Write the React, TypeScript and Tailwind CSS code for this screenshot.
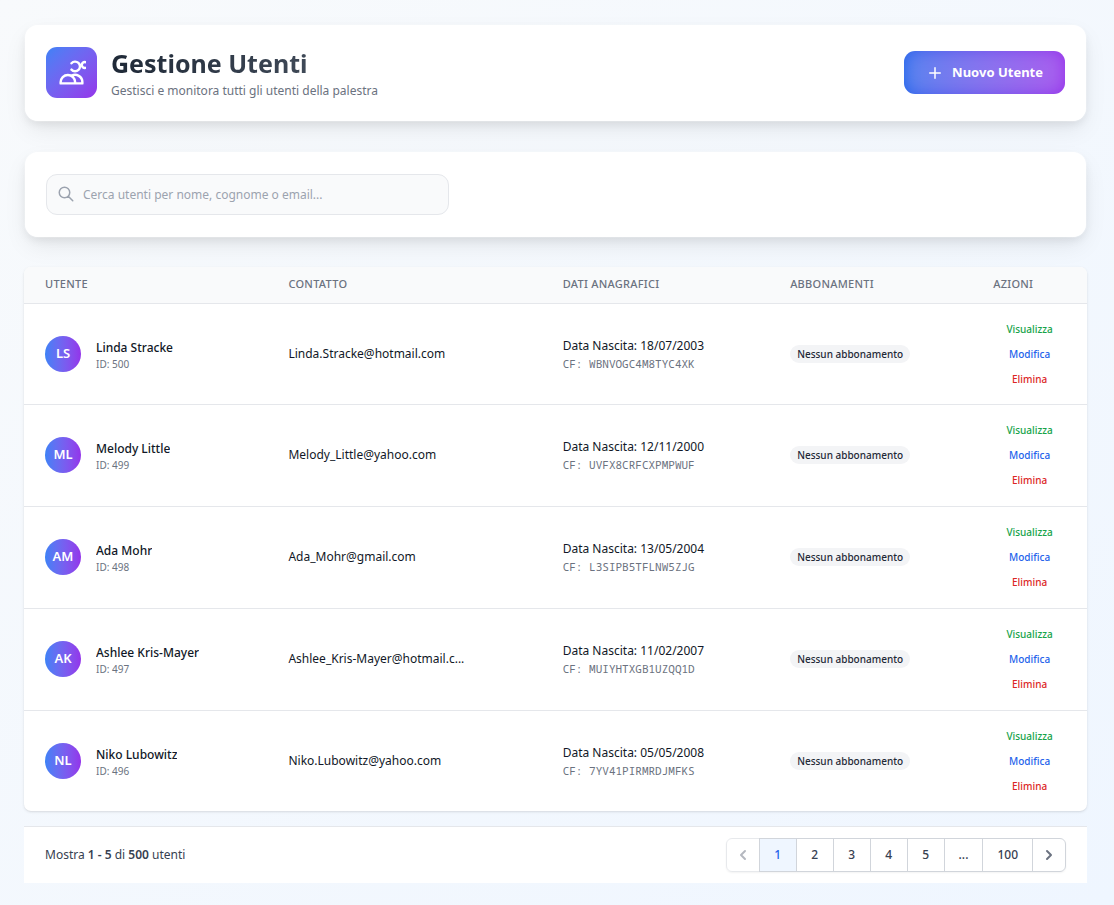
import { ChevronLeft, ChevronRight } from "lucide-react";

const users = [
  { initials: "LS", name: "Linda Stracke", id: 500, email: "Linda.Stracke@hotmail.com", birth: "18/07/2003", cf: "WBNVOGC4M8TYC4XK" },
  { initials: "ML", name: "Melody Little", id: 499, email: "Melody_Little@yahoo.com", birth: "12/11/2000", cf: "UVFX8CRFCXPMPWUF" },
  { initials: "AM", name: "Ada Mohr", id: 498, email: "Ada_Mohr@gmail.com", birth: "13/05/2004", cf: "L3SIPB5TFLNW5ZJG" },
  { initials: "AK", name: "Ashlee Kris-Mayer", id: 497, email: "Ashlee_Kris-Mayer@hotmail.c...", birth: "11/02/2007", cf: "MUIYHTXGB1UZQQ1D" },
  { initials: "NL", name: "Niko Lubowitz", id: 496, email: "Niko.Lubowitz@yahoo.com", birth: "05/05/2008", cf: "7YV41PIRMRDJMFKS" },
];

const columns = [
  { label: "Utente", width: "w-[22.9%]" },
  { label: "Contatto", width: "w-[25.8%]" },
  { label: "Dati anagrafici", width: "w-[21.4%]" },
  { label: "Abbonamenti", width: "w-[19.1%]" },
  { label: "Azioni", width: "w-[10.8%]" },
];

const card =
  "rounded-[14px] border border-white/20 bg-white bg-clip-padding px-[21px] shadow-[0_10px_25px_-3px_rgba(0,0,0,0.08),0_4px_10px_-2px_rgba(0,0,0,0.08)]";

function Header() {
  return (
    <header className={`${card} flex flex-wrap items-center justify-between gap-4 pt-5 pb-[21px]`}>
      <div className="flex items-center gap-[14px]">
        <div className="flex size-[51px] shrink-0 items-center justify-center rounded-[11px] bg-linear-to-br from-[#3b82f6] to-[#9333ea]">
          <svg className="size-[29px] text-white" viewBox="0 0 24 24" fill="none" stroke="currentColor" strokeWidth={2} strokeLinecap="round" strokeLinejoin="round" aria-hidden="true">
            <path d="M12 4.354a4 4 0 110 5.292M15 21H3v-1a6 6 0 0112 0v1zm0 0h6v-1a6 6 0 00-9-5.197m13.5-9a2.5 2.5 0 11-5 0 2.5 2.5 0 015 0z" />
          </svg>
        </div>
        <div>
          <h1 className="bg-linear-to-r from-[#1f2937] to-[#4b5563] bg-clip-text text-[25px] leading-9 font-bold text-transparent">
            Gestione Utenti
          </h1>
          <p className="mt-px text-[12px] leading-[18px] text-[#6b7280]">Gestisci e monitora tutti gli utenti della palestra</p>
        </div>
      </div>
      <button
        type="button"
        className="relative flex h-[43px] items-center gap-2 overflow-hidden rounded-[11px] bg-linear-to-r from-[#2563eb] to-[#9333ea] px-[22px] text-[13px] font-bold text-white"
      >
        <svg className="size-[18px]" viewBox="0 0 24 24" fill="none" stroke="currentColor" strokeWidth={2} strokeLinecap="round" aria-hidden="true">
          <path d="M12 5v14M5 12h14" />
        </svg>
        <span>Nuovo Utente</span>
        <span className="absolute inset-0 rounded-[11px] bg-white/20 blur-sm" />
      </button>
    </header>
  );
}

function Search() {
  return (
    <section className={`${card} py-[22px]`}>
      <div className="relative max-w-[403px]">
        <svg className="absolute top-[11px] left-[11px] size-[18px] text-[#9ca3af]" viewBox="0 0 24 24" fill="none" stroke="currentColor" strokeWidth={2} strokeLinecap="round" strokeLinejoin="round" aria-hidden="true">
          <path d="M21 21l-6-6m2-5a7 7 0 11-14 0 7 7 0 0114 0z" />
        </svg>
        <input
          type="text"
          aria-label="Cerca utenti"
          placeholder="Cerca utenti per nome, cognome o email..."
          className="block h-[41px] w-full rounded-[11px] border border-[#e5e7eb] bg-[#f9fafb] pr-4 pl-9 text-[12px] text-[#111827] outline-none placeholder:text-[#9ca3af]"
        />
      </div>
    </section>
  );
}

function UsersTable() {
  return (
    <div className="overflow-hidden rounded-[7px] bg-white shadow-[0_1px_3px_rgba(0,0,0,0.1),0_1px_2px_-1px_rgba(0,0,0,0.1)]">
      <table className="w-full table-fixed border-collapse text-left">
        <thead className="bg-[#f9fafb]">
          <tr className="h-9 border-b border-[#e5e7eb]">
            {columns.map((c) => (
              <th key={c.label} scope="col" className={`${c.width} px-[21px] pb-[2px] text-[11px] leading-4 font-medium tracking-wide text-[#6b7280] uppercase`}>
                {c.label}
              </th>
            ))}
          </tr>
        </thead>
        <tbody className="divide-y divide-[#e5e7eb]">
          {users.map((u) => (
            <tr key={u.id} className="h-[102px] first:h-[101px] last:h-[101px]">
              <td className="px-[21px]">
                <div className="flex items-center gap-[15px]">
                  <div className="flex size-9 shrink-0 items-center justify-center rounded-full bg-linear-to-r from-[#3b82f6] to-[#9333ea] text-[13px] font-semibold text-white">
                    {u.initials}
                  </div>
                  <div className="min-w-0">
                    <div className="truncate text-[12px] leading-5 font-medium text-[#111827]">{u.name}</div>
                    <div className="text-[10px] leading-3 text-[#6b7280]">ID: {u.id}</div>
                  </div>
                </div>
              </td>
              <td className="px-[21px]">
                <div className="text-[12px] leading-5 text-[#111827]">{u.email}</div>
              </td>
              <td className="px-[21px]">
                <div className="text-[12px] leading-5 text-[#111827]">Data Nascita: {u.birth}</div>
                <div className="font-['Noto_Sans_Mono','DejaVu_Sans_Mono',monospace] text-[11px] leading-4 text-[#6b7280]">CF: {u.cf}</div>
              </td>
              <td className="px-[21px]">
                <span className="flex w-fit rounded-full bg-[#f3f4f6] px-[7px] py-px text-[10px] leading-4 font-medium text-[#1f2937]">
                  Nessun abbonamento
                </span>
              </td>
              <td className="px-[21px]">
                <div className="flex flex-col items-center gap-[7px] text-[10px] leading-[18px] font-medium">
                  <a href="#visualizza" className="text-[#16a34a]">Visualizza</a>
                  <a href="#modifica" className="text-[#2563eb]">Modifica</a>
                  <a href="#elimina" className="text-[#dc2626]">Elimina</a>
                </div>
              </td>
            </tr>
          ))}
        </tbody>
      </table>
    </div>
  );
}

function Pagination() {
  const cell = "-ml-px flex h-[34px] min-w-[38px] items-center justify-center border border-[#d1d5db] px-[14px]";
  return (
    <footer className="mt-[15px] flex items-center justify-between border-t border-[#e5e7eb] bg-white px-[21px] py-[11px]">
      <p className="text-[12px] text-[#374151]">
        Mostra <span className="font-semibold">1 - 5</span> di <span className="font-semibold">500</span> utenti
      </p>
      <nav aria-label="Paginazione" className="flex rounded-md pl-px text-[12px] font-medium text-[#374151] shadow-[0_1px_2px_rgba(0,0,0,0.05)]">
        <button type="button" disabled aria-label="Pagina precedente" className="-ml-px flex h-[34px] w-[34px] items-center justify-center rounded-l-md border border-[#d1d5db] text-[#6b7280] opacity-50">
          <ChevronLeft className="size-4" strokeWidth={3} />
        </button>
        <button type="button" aria-current="page" className={`${cell} relative bg-[#eff6ff] text-[#2563eb]`}>1</button>
        {["2", "3", "4", "5"].map((n) => (
          <button key={n} type="button" className={cell}>{n}</button>
        ))}
        <span className={cell}>...</span>
        <button type="button" className={cell}>100</button>
        <button type="button" aria-label="Pagina successiva" className="-ml-px flex h-[34px] w-[34px] items-center justify-center rounded-r-md border border-[#d1d5db] text-[#6b7280]">
          <ChevronRight className="size-4" strokeWidth={3} />
        </button>
      </nav>
    </footer>
  );
}

export default function App() {
  return (
    <main className="min-h-screen bg-linear-to-br from-[#f8fafc] to-[#eff6ff] px-6 pt-6 pb-[22px] font-['Noto_Sans',sans-serif] sm:pr-[27px]">
      <div className="flex flex-col gap-[29px]">
        <Header />
        <Search />
        <div>
          <UsersTable />
          <Pagination />
        </div>
      </div>
    </main>
  );
}
